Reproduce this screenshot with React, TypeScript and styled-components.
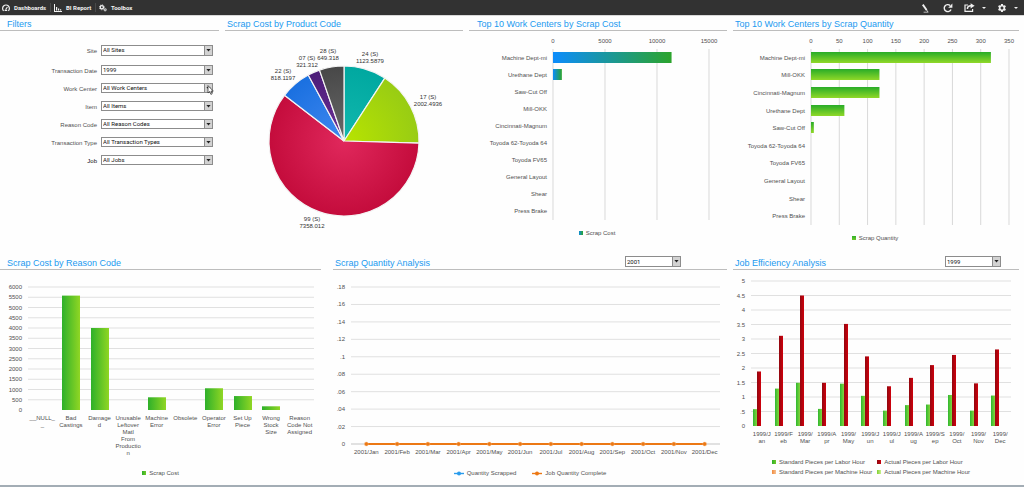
import React from "react";
import styled, { createGlobalStyle } from "styled-components";
import { MdSettings } from "react-icons/md";

const GlobalStyle = createGlobalStyle`
  * { box-sizing: border-box; }
  body {
    margin: 0;
    background: #fefefe;
    font-family: "Liberation Sans", Arial, sans-serif;
    font-size: 6px;
    color: #505050;
  }
`;

const Page = styled.div`
  display: flex;
  flex-direction: column;
  min-height: 100vh;
  border-bottom: 2px solid #a3adb5;
`;

const Toolbar = styled.header`
  display: flex;
  align-items: center;
  justify-content: space-between;
  height: 15px;
  background: #323232;
  box-shadow: 0 1px 0 #d8d8d8;
`;

const MenuList = styled.nav`
  display: flex;
  align-items: center;
`;

const MenuItem = styled.button<{ $width: number }>`
  display: flex;
  align-items: center;
  gap: 4px;
  width: ${(p) => p.$width}px;
  height: 9px;
  padding: 0 0 0 2px;
  border: 0;
  background: none;
  color: #f2f2f2;
  font: 700 6px/9px Roboto, "Liberation Sans", sans-serif;
  text-align: left;
  white-space: nowrap;
  & + & {
    padding-left: 3px;
    border-left: 1px solid #4a4a4a;
  }
  svg { flex: none; }
`;

const Tools = styled.div`
  display: flex;
  align-items: center;
  gap: 11px;
  padding-right: 6px;
`;

const ToolButton = styled.button`
  display: flex;
  align-items: center;
  gap: 7px;
  height: 12px;
  padding: 0;
  border: 0;
  background: none;
  color: #f0f0f0;
`;

const Main = styled.main`
  flex: 1;
  padding-right: 5px;
`;

const TopRow = styled.div`
  display: grid;
  grid-template-columns: 219fr 238fr 258fr 286fr;
  gap: 6px;
  min-height: 239px;
`;

const BottomRow = styled.div`
  display: grid;
  grid-template-columns: 727fr 286fr;
  gap: 6px;
`;

const BottomLeft = styled.div`
  display: grid;
  grid-template-columns: 321fr 394fr;
  gap: 12px;
`;

const Panel = styled.section`
  min-width: 0;
`;

const PanelHeader = styled.div<{ $indent: number; $end: number }>`
  display: flex;
  align-items: center;
  justify-content: space-between;
  height: 16px;
  padding: 0 ${(p) => p.$end}px 0 ${(p) => p.$indent}px;
  border-bottom: 1px solid #bdbdbd;
`;

const Title = styled.h2`
  margin: 0;
  padding-top: 3px;
  font-size: 9px;
  line-height: 12px;
  font-weight: 400;
  color: #1b9af0;
  white-space: nowrap;
`;

const Chart = styled.svg`
  display: block;
  width: 100%;
  height: auto;
  overflow: visible;
  font-family: "Liberation Sans", Arial, sans-serif;
  font-size: 6px;
  fill: #505050;
`;

const LegendBox = styled.ul<{ $columns: number; $wide?: boolean; $end?: number }>`
  display: grid;
  grid-template-columns: repeat(${(p) => p.$columns}, auto);
  justify-content: center;
  gap: 0 ${(p) => (p.$wide ? 16 : 5)}px;
  margin: 0;
  padding: 0 ${(p) => p.$end ?? 0}px 0 0;
  list-style: none;
`;

const LegendItem = styled.li`
  display: flex;
  align-items: center;
  gap: 3px;
  line-height: 10px;
  white-space: nowrap;
`;

const Swatch = styled.span<{ $fill: string }>`
  width: 4px;
  height: 4px;
  background: ${(p) => p.$fill};
`;

const FilterForm = styled.form`
  padding-top: 10px;
`;

const FilterRow = styled.div`
  display: grid;
  grid-template-columns: 97fr 112fr;
  gap: 4px;
  align-items: center;
  height: 18px;
  padding-right: 6px;
  &:first-child { margin-bottom: 2px; }
`;

const FilterLabel = styled.label<{ $strong?: boolean }>`
  padding-top: 1px;
  line-height: 8px;
  text-align: right;
  color: ${(p) => (p.$strong ? "#111" : "#505050")};
`;

const SelectWrap = styled.div<{ $width?: string; $tall?: boolean }>`
  position: relative;
  width: ${(p) => p.$width ?? "100%"};
  height: ${(p) => (p.$tall ? 11 : 10)}px;
`;

const Select = styled.select`
  appearance: none;
  display: block;
  width: 100%;
  height: 100%;
  padding: 0 9px 0 1px;
  border: 1px solid #8c8c8c;
  border-radius: 0;
  background: #fff;
  color: #111;
  font: 400 6px/8px Roboto, "Liberation Sans", sans-serif;
`;

const Arrow = styled.span`
  position: absolute;
  top: 0;
  right: 0;
  bottom: 0;
  display: flex;
  align-items: center;
  justify-content: center;
  width: 9px;
  border: 1px solid #8c8c8c;
  background: #d2d2d2;
  pointer-events: none;
`;

const Pointer = styled.svg`
  position: absolute;
  top: 2px;
  right: -1px;
  pointer-events: none;
`;

type DropProps = {
  id: string;
  value: string;
  width?: string;
  tall?: boolean;
  pointer?: boolean;
  label?: string;
};

function DropDown({ id, value, width, tall, pointer, label }: DropProps) {
  return (
    <SelectWrap $width={width} $tall={tall}>
      <Select id={id} defaultValue={value} aria-label={label}>
        <option value={value}>{value}</option>
      </Select>
      <Arrow>
        <svg width="5" height="3" viewBox="0 0 5 3">
          <path d="M.4 0H4.6L2.5 2.6Z" fill="#222" />
        </svg>
      </Arrow>
      {pointer && (
        <Pointer width="7" height="10" viewBox="0 0 7 10">
          <path d="M1 .6V8L2.7 6.5L3.9 9.4L5.2 8.8L4 6.1H6.3Z" fill="#fff" stroke="#222" strokeWidth=".7" />
        </Pointer>
      )}
    </SelectWrap>
  );
}

const filters = [
  { id: "site", label: "Site", value: "All Sites" },
  { id: "date", label: "Transaction Date", value: "1999" },
  { id: "center", label: "Work Center", value: "All Work Centers" },
  { id: "item", label: "Item", value: "All Items" },
  { id: "reason", label: "Reason Code", value: "All Reason Codes" },
  { id: "type", label: "Transaction Type", value: "All Transaction Types" },
  { id: "job", label: "Job", value: "All Jobs" },
];

const slices = [
  { name: "24 (S)", value: 1123.5879, color: "#00a8a0", light: "#12b8ae", x: 145, y: 25 },
  { name: "17 (S)", value: 2002.4936, color: "#98cc14", light: "#b8e400", x: 203, y: 68 },
  { name: "99 (S)", value: 7358.012, color: "#c40c3c", light: "#e0285c", x: 87, y: 190 },
  { name: "22 (S)", value: 818.1197, color: "#1a70e0", light: "#4088f0", x: 58, y: 42 },
  { name: "07 (S)", value: 321.312, color: "#4c1c78", light: "#6c3098", x: 82, y: 29 },
  { name: "28 (S)", value: 649.318, color: "#484848", light: "#686868", x: 103, y: 22 },
];

function PieChart() {
  const cx = 119;
  const cy = 110;
  const r = 75;
  const total = slices.reduce((sum, s) => sum + s.value, 0);
  let angle = 0;
  const point = (a: number) => `${cx + r * Math.sin(a)} ${cy - r * Math.cos(a)}`;
  return (
    <Chart viewBox="0 0 238 208" role="img" aria-label="Scrap cost by product code">
      <defs>
        {slices.map((s, i) => (
          <radialGradient key={s.name} id={`slice${i}`} gradientUnits="userSpaceOnUse" cx={cx} cy={cy} r={r}>
            <stop offset="0" stopColor={s.light} />
            <stop offset="1" stopColor={s.color} />
          </radialGradient>
        ))}
      </defs>
      {slices.map((s, i) => {
        const start = angle;
        angle += (s.value / total) * Math.PI * 2;
        const large = angle - start > Math.PI ? 1 : 0;
        return (
          <path
            key={s.name}
            d={`M${cx} ${cy}L${point(start)}A${r} ${r} 0 ${large} 1 ${point(angle)}Z`}
            fill={`url(#slice${i})`}
            stroke="#f4f4f4"
            strokeWidth="1.2"
            strokeLinejoin="bevel"
          />
        );
      })}
      {slices.map((s) => (
        <text key={s.name} textAnchor="middle" fill="#333">
          <tspan x={s.x} y={s.y}>{s.name}</tspan>
          <tspan x={s.x} dy="7">{s.value}</tspan>
        </text>
      ))}
    </Chart>
  );
}

type HBarProps = {
  id: string;
  width: number;
  height: number;
  left: number;
  right: number;
  bottom: number;
  max: number;
  step: number;
  rows: [string, number][];
  vertical?: boolean;
  colors: [string, string];
};

function HorizontalBars({ id, width, height, left, right, bottom, max, step, rows, vertical, colors }: HBarProps) {
  const top = 18;
  const pitch = (bottom - top) / rows.length;
  const ticks = Array.from({ length: max / step + 1 }, (_, i) => i * step);
  const x = (v: number) => left + (v / max) * (right - left);
  return (
    <Chart viewBox={`0 0 ${width} ${height}`}>
      <defs>
        <linearGradient id={id} x1="0" y1="0" x2={vertical ? 0 : 1} y2={vertical ? 1 : 0}>
          <stop offset="0" stopColor={colors[0]} />
          <stop offset="1" stopColor={colors[1]} />
        </linearGradient>
      </defs>
      {ticks.map((t) => (
        <g key={t}>
          <path d={`M${x(t)} ${top}V${bottom}`} stroke="#d9d9d9" />
          <text x={x(t)} y="12" textAnchor="middle">{t}</text>
        </g>
      ))}
      {rows.map(([name, value], i) => {
        const mid = top + pitch * (i + 0.5);
        return (
          <g key={name}>
            <text x={left - 6} y={mid + 2} textAnchor="end">{name}</text>
            {value > 0 && (
              <rect x={left} y={Math.round(mid - 6)} width={x(value) - left} height="11" fill={`url(#${id})`} />
            )}
          </g>
        );
      })}
    </Chart>
  );
}

type GridProps = {
  left: number;
  right: number;
  top: number;
  bottom: number;
  labels: string[];
  baseline?: boolean;
};

/* Horizontal rules with their scale labels, listed from the top down. */
function ValueGrid({ left, right, top, bottom, labels, baseline }: GridProps) {
  const pitch = (bottom - top) / (labels.length - 1);
  return (
    <>
      {labels.map((label, i) => {
        const y = top + pitch * i;
        const last = i === labels.length - 1;
        return (
          <g key={label}>
            {(!last || baseline) && <path d={`M${left} ${y}H${right}`} stroke={last ? "#c4c4c4" : "#e0e0e0"} />}
            <text x={left - 6} y={y + 2} textAnchor="end">{label}</text>
          </g>
        );
      })}
    </>
  );
}

function WrappedLabel({ x, y, lines }: { x: number; y: number; lines: string[] }) {
  return (
    <text textAnchor="middle">
      {lines.map((line, i) => (
        <tspan key={i} x={x} y={y + i * 7}>{line}</tspan>
      ))}
    </text>
  );
}

const reasons: [string[], number][] = [
  [["__NULL_", "_"], 0],
  [["Bad", "Castings"], 5580],
  [["Damage", "d"], 4000],
  [["Unusable", "Leftover", "Matl", "From", "Productio", "n"], 0],
  [["Machine", "Error"], 620],
  [["Obsolete"], 0],
  [["Operator", "Error"], 1060],
  [["Set Up", "Piece"], 680],
  [["Wrong", "Stock", "Size"], 180],
  [["Reason", "Code Not", "Assigned"], 0],
];

function ReasonChart() {
  const left = 28;
  const right = 314;
  const top = 17;
  const bottom = 140;
  const pitch = (right - left) / reasons.length;
  const labels = Array.from({ length: 13 }, (_, i) => String(6000 - i * 500));
  return (
    <Chart viewBox="0 0 321 198">
      <defs>
        <linearGradient id="reason-fill">
          <stop offset="0" stopColor="#2eb02a" />
          <stop offset="1" stopColor="#90d624" />
        </linearGradient>
      </defs>
      <ValueGrid left={left} right={right} top={top} bottom={bottom} labels={labels} />
      {reasons.map(([lines, value], i) => {
        const mid = left + pitch * (i + 0.5);
        const h = (value / 6000) * (bottom - top);
        return (
          <g key={i}>
            {value > 0 && (
              <rect x={Math.round(mid - 9)} y={bottom - h} width="18" height={h} fill="url(#reason-fill)" />
            )}
            <WrappedLabel x={mid} y={150} lines={lines} />
          </g>
        );
      })}
    </Chart>
  );
}

const months = ["Jan", "Feb", "Mar", "Apr", "May", "Jun", "Jul", "Aug", "Sep", "Oct", "Nov", "Dec"];

function QuantityChart() {
  const left = 18;
  const right = 387;
  const bottom = 174;
  const pitch = (right - left) / 12;
  const labels = [".18", ".16", ".14", ".12", ".1", ".08", ".06", ".04", ".02", "0"];
  const x = (i: number) => left + pitch * (i + 0.5);
  return (
    <Chart viewBox="0 0 394 198">
      <ValueGrid left={left} right={right} top={17} bottom={bottom} labels={labels} baseline />
      <path d={`M${x(0)} ${bottom}H${x(11)}`} stroke="#ec7814" strokeWidth="2" />
      {months.map((m, i) => (
        <g key={m}>
          <circle cx={x(i)} cy={bottom} r="2" fill="#ec7814" stroke="#f8c08c" strokeWidth=".4" />
          <text x={x(i)} y={bottom + 10} textAnchor="middle">{`2001/${m}`}</text>
        </g>
      ))}
    </Chart>
  );
}

const standard = [0.58, 1.29, 1.49, 0.59, 1.46, 1.04, 0.53, 0.72, 0.74, 1.07, 0.53, 1.05];
const actual = [1.88, 3.11, 4.5, 1.49, 3.52, 2.4, 1.37, 1.66, 2.1, 2.45, 1.47, 2.64];
const monthLines = [
  ["1999/J", "an"], ["1999/F", "eb"], ["1999/", "Mar"], ["1999/A", "pr"], ["1999/", "May"], ["1999/J", "un"],
  ["1999/J", "ul"], ["1999/A", "ug"], ["1999/S", "ep"], ["1999/", "Oct"], ["1999/", "Nov"], ["1999/", "Dec"],
];

function EfficiencyChart() {
  const left = 18;
  const right = 278;
  const top = 11;
  const bottom = 156;
  const pitch = (right - left) / 12;
  const labels = ["5", "4.5", "4", "3.5", "3", "2.5", "2", "1.5", "1", ".5", "0"];
  const h = (v: number) => (v / 5) * (bottom - top);
  return (
    <Chart viewBox="0 0 286 187">
      <defs>
        <linearGradient id="standard-fill">
          <stop offset="0" stopColor="#2eb830" />
          <stop offset="1" stopColor="#86d43c" />
        </linearGradient>
        <linearGradient id="actual-fill">
          <stop offset="0" stopColor="#900810" />
          <stop offset="1" stopColor="#d0000c" />
        </linearGradient>
      </defs>
      <ValueGrid left={left} right={right} top={top} bottom={bottom} labels={labels} />
      {monthLines.map((lines, i) => {
        const x = Math.round(left + pitch * i);
        return (
          <g key={i}>
            <rect x={x + 2} y={bottom - h(standard[i])} width="4" height={h(standard[i])} fill="url(#standard-fill)" />
            <rect x={x + 6} y={bottom - h(actual[i])} width="4" height={h(actual[i])} fill="url(#actual-fill)" />
            <WrappedLabel x={left + pitch * (i + 0.5)} y={166} lines={lines} />
          </g>
        );
      })}
    </Chart>
  );
}

function LineKey({ color }: { color: string }) {
  return (
    <svg width="10" height="5" viewBox="0 0 10 5">
      <path d="M0 2.5H10" stroke={color} strokeWidth="1.4" />
      <circle cx="5" cy="2.5" r="2" fill={color} />
    </svg>
  );
}

function Caret() {
  return (
    <svg width="4" height="2" viewBox="0 0 4 2">
      <path d="M0 0H4L2 2Z" fill="currentColor" />
    </svg>
  );
}

const GREEN = "linear-gradient(90deg, #2eb02a, #70c828)";

export default function App() {
  return (
    <Page>
      <GlobalStyle />
      <Toolbar>
        <MenuList>
          <MenuItem $width={50}>
            <svg width="8" height="8" viewBox="0 0 8 8" fill="none" stroke="currentColor">
              <path d="M1.6 6.8A3.4 3.4 0 1 1 6.4 6.8" strokeWidth="1.2" />
              <path d="M3.6 5.6L5.4 3" strokeWidth="1.1" />
              <path d="M2.6 6.4H5.2" strokeWidth="1.2" />
            </svg>
            Dashboards
          </MenuItem>
          <MenuItem $width={45}>
            <svg width="8" height="8" viewBox="0 0 8 8" fill="currentColor">
              <path d="M0 0H1V7H8V8H0ZM2 3H3.2V6.4H2ZM4 4.4H5.2V6.4H4ZM6 5.2H7.2V6.4H6Z" />
            </svg>
            BI Report
          </MenuItem>
          <MenuItem $width={46}>
            <svg width="8" height="8" viewBox="0 0 9 8" fill="none" stroke="currentColor">
              <circle cx="3.2" cy="3.2" r="1.8" strokeWidth="1.5" />
              <circle cx="3.2" cy="3.2" r="2.8" strokeWidth=".9" strokeDasharray="1.1 1.1" />
              <circle cx="7" cy="6" r="1" strokeWidth="1" />
              <circle cx="7" cy="6" r="1.6" strokeWidth=".6" strokeDasharray=".63 .63" />
            </svg>
            Toolbox
          </MenuItem>
        </MenuList>
        <Tools>
          <ToolButton aria-label="Edit">
            <svg width="10" height="10" viewBox="0 0 10 10" fill="none" stroke="currentColor">
              <path d="M.8 1.6L4.6 7" strokeWidth="1.9" />
              <path d="M4.2 6.4L5.8 8.8" strokeWidth=".9" />
              <path d="M1.6 9.2H6.4" strokeWidth=".7" />
            </svg>
          </ToolButton>
          <ToolButton aria-label="Refresh">
            <svg width="10" height="10" viewBox="0 0 10 10" fill="none" stroke="currentColor">
              <path d="M8 6.4A3.5 3.5 0 1 1 7.2 2.6" strokeWidth="1.4" />
              <path d="M9.4 .6V4.8H5.2Z" fill="currentColor" stroke="none" />
            </svg>
          </ToolButton>
          <ToolButton aria-label="Share">
            <svg width="11" height="9" viewBox="0 0 11 9" fill="none" stroke="currentColor">
              <path d="M4 2H1V8.3H8.6V6" strokeWidth="1.2" />
              <path d="M3.4 6C3.4 3.8 4.6 2.8 7 2.8" strokeWidth="1.5" />
              <path d="M6.6 .2L10.6 2.8L6.6 5.4Z" fill="currentColor" stroke="none" />
            </svg>
            <Caret />
          </ToolButton>
          <ToolButton aria-label="Settings">
            <MdSettings size={10} />
            <Caret />
          </ToolButton>
        </Tools>
      </Toolbar>
      <Main>
        <TopRow>
          <Panel>
            <PanelHeader $indent={7} $end={0}><Title>Filters</Title></PanelHeader>
            <FilterForm>
              {filters.map((f) => (
                <FilterRow key={f.id}>
                  <FilterLabel htmlFor={f.id} $strong={f.id === "job"}>{f.label}</FilterLabel>
                  <DropDown id={f.id} value={f.value} tall={f.id === "site"} pointer={f.id === "center"} />
                </FilterRow>
              ))}
            </FilterForm>
          </Panel>
          <Panel>
            <PanelHeader $indent={2} $end={0}><Title>Scrap Cost by Product Code</Title></PanelHeader>
            <PieChart />
          </Panel>
          <Panel>
            <PanelHeader $indent={8} $end={0}><Title>Top 10 Work Centers by Scrap Cost</Title></PanelHeader>
            <HorizontalBars
              id="cost-fill" width={258} height={197} left={84} right={240} bottom={189} max={15000} step={5000}
              colors={["#0c8cfc", "#2ca42c"]}
              rows={[
                ["Machine Dept-mi", 11400], ["Urethane Dept", 850], ["Saw-Cut Off", 0], ["Mill-OKK", 0],
                ["Cincinnati-Magnum", 0], ["Toyoda 62-Toyoda 64", 0], ["Toyoda FV65", 0],
                ["General Layout", 0], ["Shear", 0], ["Press Brake", 0],
              ]}
            />
            <LegendBox $columns={1} $end={2}>
              <LegendItem><Swatch $fill="linear-gradient(90deg, #0c8cd8, #2ca42c)" />Scrap Cost</LegendItem>
            </LegendBox>
          </Panel>
          <Panel>
            <PanelHeader $indent={2} $end={0}><Title>Top 10 Work Centers by Scrap Quantity</Title></PanelHeader>
            <HorizontalBars
              id="quantity-fill" width={286} height={202} left={78} right={276} bottom={194} max={350} step={50}
              colors={["#28ac28", "#90d828"]} vertical
              rows={[
                ["Machine Dept-mi", 318], ["Mill-OKK", 121], ["Cincinnati-Magnum", 121], ["Urethane Dept", 59],
                ["Saw-Cut Off", 5], ["Toyoda 62-Toyoda 64", 0], ["Toyoda FV65", 0],
                ["General Layout", 0], ["Shear", 0], ["Press Brake", 0],
              ]}
            />
            <LegendBox $columns={1} $end={2}>
              <LegendItem><Swatch $fill="linear-gradient(#2eb02a, #70c828)" />Scrap Quantity</LegendItem>
            </LegendBox>
          </Panel>
        </TopRow>
        <BottomRow>
          <BottomLeft>
            <Panel>
              <PanelHeader $indent={7} $end={0}><Title>Scrap Cost by Reason Code</Title></PanelHeader>
              <ReasonChart />
              <LegendBox $columns={1}>
                <LegendItem><Swatch $fill={GREEN} />Scrap Cost</LegendItem>
              </LegendBox>
            </Panel>
            <Panel>
              <PanelHeader $indent={2} $end={46}>
                <Title>Scrap Quantity Analysis</Title>
                <DropDown id="quantity-year" value="2001" width="56px" tall label="Quantity year" />
              </PanelHeader>
              <QuantityChart />
              <LegendBox $columns={2} $wide>
                <LegendItem><LineKey color="#2a9cec" />Quantity Scrapped</LegendItem>
                <LegendItem><LineKey color="#ec7814" />Job Quantity Complete</LegendItem>
              </LegendBox>
            </Panel>
          </BottomLeft>
          <Panel>
            <PanelHeader $indent={2} $end={18}>
              <Title>Job Efficiency Analysis</Title>
              <DropDown id="job-year" value="1999" width="56px" tall label="Job efficiency year" />
            </PanelHeader>
            <EfficiencyChart />
            <LegendBox $columns={2} $end={10}>
              <LegendItem><Swatch $fill={GREEN} />Standard Pieces per Labor Hour</LegendItem>
              <LegendItem><Swatch $fill="linear-gradient(90deg, #900810, #c8000c)" />Actual Pieces per Labor Hour</LegendItem>
              <LegendItem><Swatch $fill="linear-gradient(90deg, #f08c40, #f8c090)" />Standard Pieces per Machine Hour</LegendItem>
              <LegendItem><Swatch $fill="linear-gradient(90deg, #80d030, #c8f090)" />Actual Pieces per Machine Hour</LegendItem>
            </LegendBox>
          </Panel>
        </BottomRow>
      </Main>
    </Page>
  );
}
